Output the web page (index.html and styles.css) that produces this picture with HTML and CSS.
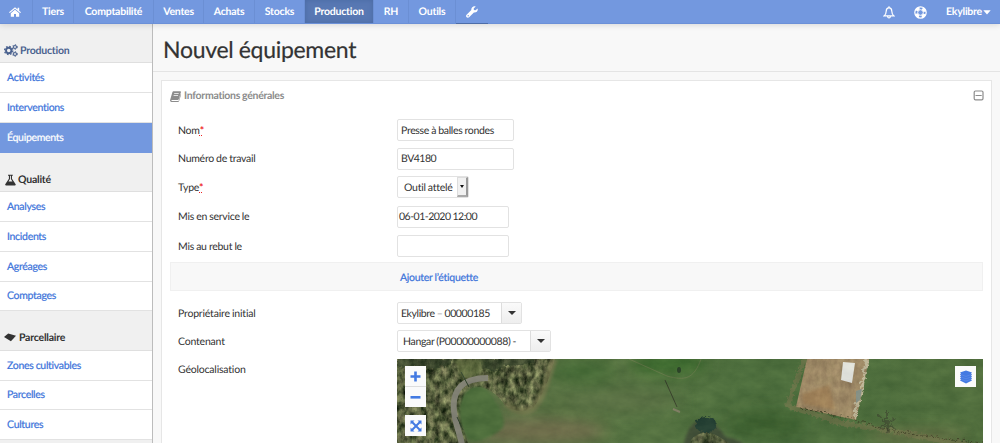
FILE: index.html
```html
<!DOCTYPE html>
<html lang="fr">
<head>
<meta charset="utf-8">
<title>Nouvel équipement</title>
<link rel="stylesheet" href="styles.css">
</head>
<body>
<nav class="topbar">
  <a class="tab tab-home"><svg width="12" height="10" viewBox="0 0 12 10"><path d="M6 .3 0 5.3l.8.8L6 1.8l5.2 4.3.8-.8-1.8-1.5V.8H8.600v1.600z"/><path d="M6 2.700 1.800 6.200v3.500H5V6.900h2v2.800h3.200V6.200z"/></svg></a>
  <a class="tab tab-tiers">Tiers</a>
  <a class="tab tab-compta">Comptabilité</a>
  <a class="tab tab-ventes">Ventes</a>
  <a class="tab tab-achats">Achats</a>
  <a class="tab tab-stocks">Stocks</a>
  <a class="tab tab-prod active">Production</a>
  <a class="tab tab-rh">RH</a>
  <a class="tab tab-outils">Outils</a>
  <a class="tab tab-wrench"><svg width="12" height="12" viewBox="0 0 12 12"><path d="M11.600 2.500 9.500 4.300 7.900 3.900 7.700 2.400 9.700.4C7.500-.4 5 1.200 5.300 4L.6 8.800c-1.600 1.700.8 4 2.500 2.500L7.900 6.500c2.500.4 4.400-1.600 3.700-4zM2.200 10.500a.7.7 0 1 1 0-1.400.7.7 0 0 1 0 1.400z" fill-rule="evenodd"/></svg></a>
  <div class="tools">
    <svg class="bell" width="12" height="13" viewBox="0 0 12 13"><path d="M6 1.600C3.800 1.900 3.200 3.500 3.200 5.200c0 2.400-.8 3.700-2.200 4.700h10C9.600 8.900 8.800 7.600 8.800 5.200 8.800 3.500 8.200 1.900 6 1.600zM6 .3v1.300M4.600 10.500c.2 1.900 2.600 1.900 2.800 0" fill="none" stroke="#fff" stroke-width="1.200"/></svg>
    <svg class="ring" width="13" height="13" viewBox="0 0 13 13"><circle cx="6.500" cy="6.500" r="5.700" fill="none" stroke="#fff" stroke-width="1.200"/><circle cx="6.500" cy="6.500" r="2.800" fill="none" stroke="#fff"/><circle cx="6.500" cy="6.500" r="4.400" fill="none" stroke="#fff" stroke-width="2.800" stroke-dasharray="3.900 3.012" stroke-dashoffset="-1.500"/></svg>
    <span class="user">Ekylibre</span><svg width="8" height="5" viewBox="0 0 8 5"><path d="M.3.300h7.400L4 4.600z"/></svg>
  </div>
</nav>
<div class="layout">
  <aside class="sidebar">
    <h2 class="group group-first"><svg width="14" height="13" viewBox="0 0 14 13"><g fill="none" stroke="#4b628f"><circle cx="4.700" cy="6.500" r="2.700" stroke-width="1.900"/><circle cx="4.700" cy="6.500" r="4.100" stroke-width="1.300" stroke-dasharray="1.600 1.620"/><circle cx="11" cy="3" r="1.500" stroke-width="1.200"/><circle cx="11" cy="3" r="2.400" stroke-width=".9" stroke-dasharray="1.200 1.310"/><circle cx="11" cy="10" r="1.500" stroke-width="1.200"/><circle cx="11" cy="10" r="2.400" stroke-width=".9" stroke-dasharray="1.200 1.310"/></g></svg>Production</h2>
    <a class="item">Activités</a>
    <a class="item">Interventions</a>
    <a class="item current">Équipements</a>
    <h2 class="group group-quality"><svg width="11" height="12" viewBox="0 0 11 12"><path d="M3 .8h4.800v1H7v3l3.500 5.200c.5.800.1 1.400-.7 1.400H1.100c-.8 0-1.200-.6-.7-1.400L3.900 4.800v-3H3zm2 1v3.300L3.500 7.400h3.900L5.900 5.100V1.800z" fill-rule="evenodd"/></svg>Qualité</h2>
    <a class="item">Analyses</a>
    <a class="item">Incidents</a>
    <a class="item">Agréages</a>
    <a class="item item-last">Comptages</a>
    <h2 class="group group-land"><svg width="12" height="9" viewBox="0 0 12 9"><path d="M4.200.5 12 2.700 6.900 8.300 0 4z"/></svg>Parcellaire</h2>
    <a class="item">Zones cultivables</a>
    <a class="item item-short">Parcelles</a>
    <a class="item">Cultures</a>
  </aside>
  <main class="main">
    <header class="heading"><h1>Nouvel équipement</h1></header>
    <section class="panel">
      <div class="panel-head">
        <svg width="11" height="11" viewBox="0 0 11 11"><path d="M3.800.3h6.500c.6 0 .8.400.6 1L8.800 8.200c-.2.600-.5.800-1.100.800H1.900c-.8 0-.8.900 0 .9h6.700L10.700 3c.4.400.4.700.3 1.100L9.100 10c-.2.600-.6.900-1.200.9H1.500C.4 10.900-.2 9.900.2 8.700L2.300 1.500C2.600.700 3 .3 3.800.3zm.5 2-.2.700h4.500l.2-.7zm-.6 1.900-.2.700H8l.2-.7z" fill-rule="evenodd"/></svg>
        <span>Informations générales</span>
        <svg class="fold" width="11" height="11" viewBox="0 0 11 11"><path d="M2.500 1h6.200q1.300 0 1.300 1.300v6.200q0 1.300-1.300 1.300H2.500q-1.300 0-1.300-1.300V2.300Q1.200 1 2.500 1zM2.500 5.500h6.200" fill="none" stroke="#8c8c8c" stroke-width="1.200"/></svg>
      </div>
      <div class="row"><label>Nom<abbr>*</abbr></label><div class="field wide">Presse à balles rondes</div></div>
      <div class="row row-number"><label>Numéro de travail</label><div class="field wide code">BV4180</div></div>
      <div class="row"><label>Type<abbr>*</abbr></label><div class="field select"><span>Outil attelé</span><i class="native-arrow"></i></div></div>
      <div class="row row-date"><label>Mis en service le</label><div class="field date">06-01-2020 12:00</div></div>
      <div class="row"><label>Mis au rebut le</label><div class="field date"></div></div>
      <div class="labels"><a>Ajouter l’étiquette</a></div>
      <div class="row"><label>Propriétaire initial</label><div class="field combo owner"><span>Ekylibre <small>–</small> 00000185</span><i class="drop"></i></div></div>
      <div class="row"><label>Contenant</label><div class="field combo container"><span>Hangar (P00000000088) -</span><i class="drop"></i></div></div>
      <div class="row row-map"><label>Géolocalisation</label>
        <div class="map">
          <svg class="aerial" width="586" height="85" viewBox="0 0 586 85" color-interpolation-filters="sRGB">
            <defs>
              <filter id="leaf" x="0" y="0" width="100%" height="100%"><feTurbulence type="fractalNoise" baseFrequency=".16 .11" numOctaves="4" seed="8"/><feColorMatrix values=".9 0 0 0 -.12  .85 .08 0 0 -.1  .65 0 0 0 -.09  0 0 0 0 1"/><feComposite in2="SourceGraphic" operator="in"/></filter>
              <filter id="grain" x="0" y="0" width="100%" height="100%"><feTurbulence type="fractalNoise" baseFrequency=".05 .09" numOctaves="4" seed="3"/><feColorMatrix values=".8 0 0 0 0  .8 0 0 0 0  .55 0 0 0 0  0 0 0 0 .12"/><feComposite in2="SourceGraphic" operator="in"/></filter>
              <filter id="rough" x="-20%" y="-20%" width="140%" height="140%"><feTurbulence baseFrequency=".18" numOctaves="2"/><feDisplacementMap in="SourceGraphic" xChannelSelector="R" yChannelSelector="G" scale="6" result="d"/><feOffset in="d" dx="-2" dy="-2"/><feGaussianBlur stdDeviation=".5"/></filter>
              <filter id="soft" x="-30%" y="-100%" width="160%" height="300%"><feGaussianBlur stdDeviation="7"/></filter>
              <filter id="fine"><feGaussianBlur stdDeviation=".5"/></filter>
              <filter id="edge" x="-10%" y="-10%" width="120%" height="120%"><feGaussianBlur stdDeviation="1.500"/></filter>
              <linearGradient id="field"><stop stop-color="#5d6c46"/><stop offset=".35" stop-color="#567642"/><stop offset=".65" stop-color="#496f3c"/><stop offset="1" stop-color="#4f703d"/></linearGradient>
            </defs>
            <path fill="url(#field)" d="M0 0h586v85H0z"/>
            <g filter="url(#soft)">
              <ellipse cx="145" cy="72" rx="65" ry="12" fill="#716e4d"/>
              <ellipse cx="185" cy="12" rx="32" ry="13" fill="#426b35"/>
              <ellipse cx="272" cy="5" rx="38" ry="10" fill="#376c2b"/>
              <ellipse cx="225" cy="42" rx="60" ry="11" fill="#5a7346"/>
              <ellipse cx="370" cy="65" rx="40" ry="14" fill="#385f2d"/>
              <ellipse cx="520" cy="77" rx="50" ry="6" fill="#6b7247"/>
            </g>
            <g filter="url(#fine)"><path d="M0 0h158c-7 22-12 37-22 49-12 6-24 2-29-4C99 34 90 28 80 28c-14 3-18 18-14 38l5 19H0z" filter="url(#leaf)"/></g>
            <path d="M157 0c-9 28-13 43-22 50-10 5-20 1-26-6" fill="none" stroke="#7c7d52" stroke-width="7" opacity=".7" filter="url(#edge)"/>
            <path d="M0 0h55v7l-20 3-35-2zM82 0h55v5l-28 2-12 6-12-3z" fill="#253521" opacity=".6" filter="url(#rough)"/>
            <path d="M57 0h28v14L66 20z" fill="#60703f" opacity=".7" filter="url(#edge)"/>
            <path d="M77 28c10-1 16 4 20 12 8 13 13 22 8 30-10 8-25 15-33 11-8-12-12-25-8-38 2-8 6-13 13-15z" fill="#4a6f3b" filter="url(#edge)"/>
            <path d="M91 19c-27 0-36 13-34 33 1 13 6 22 8 34" fill="none" stroke="#85857a" stroke-width="6" filter="url(#fine)"/>
            <path d="m64 13 8 15M60 58l6 13" stroke="#293d29" fill="none"/>
            <path d="m232 0 38 17c18 5 27 3 34-17" fill="none" stroke="#7b8058" opacity=".5" filter="url(#fine)"/>
            <path d="m268 21 12 27" stroke="#353f2b" fill="none" filter="url(#fine)"/><path d="m276 50 7 3" stroke="#858369" stroke-width="2" filter="url(#fine)"/>
            <ellipse cx="282" cy="11" rx="2" ry="3" fill="#213c23"/>
            <path d="m410 0-11 48 60 13L472 0z" fill="#bd9c78"/>
            <path d="m410 0-11 48 60 13L472 0z" filter="url(#leaf)" opacity=".22"/>
            <path d="m405 35 27-9 6 25-32-6z" fill="#a67b4d" opacity=".5" filter="url(#edge)"/>
            <path d="m446 3 12 1-3 20-11-3z" fill="#f2f3ef"/>
            <path d="m471 0-5 25-8 34" fill="none" stroke="#c7bea1" stroke-width="3" filter="url(#rough)"/>
            <path d="m459 32 6-2-2 11-4 3z" fill="#88958e"/>
            <path d="m408 0-17 47 55 18 35 5 105 19" fill="none" stroke="#78754e" stroke-width="5" opacity=".6" filter="url(#rough)"/>
            <path d="m403 49 55 12 38 12 90 12" fill="none" stroke="#373820" stroke-dasharray="3 2" opacity=".8" filter="url(#rough)"/>
            <path d="m490 65-8-8m8 8 0-12m0 12 9-5m-9 5 2 9m-2-9-8 5m8-5 9 6" stroke="#353d2b" stroke-width="2" opacity=".6" filter="url(#rough)"/>
            <path d="M286 90c2-13 6-26 18-30 12-2 19 11 25 18 10 2 17 4 21 12z" fill="#3a4934" filter="url(#edge)"/>
            <path d="M290 90c5-16 13-15 20-17 9 2 16 7 31 17z" filter="url(#leaf)" opacity=".8"/>
            <ellipse cx="309" cy="66" rx="10" ry="8" fill="#1b3930" filter="url(#rough)"/>
            <path d="M0 0h586v85H0z" filter="url(#grain)"/>
          </svg>
          <div class="controls">
            <div class="zoom"><b><svg width="11" height="11" viewBox="0 0 11 11"><path d="M4.200.500h2.600v3.700h3.700v2.600H6.800v3.700H4.200V6.800H.5V4.200h3.700z"/></svg></b><b><svg width="11" height="11" viewBox="0 0 11 11"><path d="M.5 4h10v2.600H.5z"/></svg></b></div>
            <div class="full"><svg width="12" height="12" viewBox="0 0 12 12"><path d="M.5.500h4L3.200 1.800 6 4.600l2.800-2.800L7.500.500h4v4l-1.300-1.300L7.400 6l2.800 2.800 1.300-1.300v4h-4l1.300-1.300L6 7.400l-2.800 2.800 1.300 1.300h-4v-4l1.300 1.300L4.600 6 1.800 3.200.5 4.500z"/></svg></div>
          </div>
          <div class="layers"><svg width="14" height="14" viewBox="0 0 14 14"><path d="m7 .5 6 2-1 1 1 1-1 1 1 1-1 1 1 1-1 1 1 1-6 3-6-3 1-1-1-1 1-1-1-1 1-1-1-1 1-1-1-1z"/><path d="m2 4.600 5 1.800 5-1.800M2 7l5 1.800L12 7M2 9.200l5 1.800 5-1.800" fill="none" stroke="#7398eb" stroke-width=".4"/></svg></div>
        </div>
      </div>
    </section>
  </main>
</div>
</body>
</html>
```

FILE: styles.css
```css
* { box-sizing: border-box; }
body { margin: 0; height: 443px; overflow: hidden; background: #f8f8f8; color: #333; font: 10.5px/14px Lato, sans-serif; font-variant-ligatures: none; text-rendering: geometricPrecision; letter-spacing: -.28px; word-spacing: -.2px; }
svg { display: block; flex: none; }
h1, h2 { margin: 0; }
.topbar { display: flex; height: 24px; background: #7398df; color: #fff; font-weight: 700; border-bottom: 1px solid #6b90d8; position: relative; z-index: 1; box-shadow: 0 1px 6px #0002; letter-spacing: -.22px; }
.topbar svg { fill: #fff; }
.tab { display: flex; align-items: center; justify-content: center; padding-top: 1px; border-right: 1px solid #6b8fd4; white-space: nowrap; }
.tab-home { width: 33px; padding-right: 2px; }
.tab-tiers { width: 41px; }
.tab-compta { width: 80px; }
.tab-ventes { width: 50px; }
.tab-achats { width: 51px; }
.tab-stocks { width: 50px; }
.tab-prod { width: 69px; }
.tab-rh { width: 35px; }
.tab-outils { width: 47px; }
.tab-wrench { width: 32px; border-right: 0; border-bottom: 1px solid #4d6da8; height: 24px; }
.tab.active { background: #5878b3; box-shadow: inset 0 0 5px #3c5b9580; }
.tools { display: flex; align-items: center; margin-left: auto; padding: 1px 9px 0 0; }
.bell { margin-right: 19px; }
.ring { margin-right: 19px; }
.user { margin-right: 1px; }
.layout { display: flex; height: 419px; }
.sidebar { width: 153px; flex: none; background: #f0f0f0; border-right: 1px solid #bcbcbc; }
.group { display: flex; align-items: center; font-size: 10.5px; font-weight: 700; border-bottom: 1px solid #dfdfdf; white-space: nowrap; letter-spacing: -.22px; }
.group svg { fill: #333; }
.group-first { height: 39px; padding: 15px 0 0 4px; gap: 2px; color: #4b628f; }
.group-quality { height: 39px; padding: 15px 0 0 5px; gap: 2px; }
.group-land { height: 40px; padding: 14px 0 0 4px; gap: 3px; }
.item { display: flex; align-items: center; height: 30px; padding-left: 7px; background: #fff; border-bottom: 1px solid #e2e2e2; color: #3b73da; letter-spacing: -.3px; -webkit-text-stroke: .2px; }
.item.current { background: #7398df; color: #fff; border-color: #7398df; }
.item-last { height: 29px; }
.item-short { height: 29px; }
.main { flex: 1; min-width: 0; }
.heading { height: 48px; padding: 10px; border-bottom: 1px solid #e4e4e4; }
h1 { font-size: 23px; line-height: 30px; font-weight: 400; color: #333; -webkit-text-stroke: .2px; letter-spacing: -.3px; }
.panel { margin: 8px 8px 0; height: 380px; border: 1px solid #e6e6e6; background: #fff; padding: 0 8px; }
.panel-head { display: flex; align-items: center; height: 35px; padding-bottom: 5px; gap: 3px; color: #8c8c8c; font-weight: 700; letter-spacing: -.3px; }
.panel-head svg { fill: #8c8c8c; }
.panel-head .fold { margin-left: auto; margin-right: -1px; margin-bottom: 1px; }
.row { display: flex; align-items: center; height: 28px; padding-left: 8px; }
.row label { width: 219px; flex: none; padding-top: 1px; letter-spacing: -.27px; }
.row:nth-last-child(-n+3) label { letter-spacing: -.2px; }
.row-number { height: 29px; }
.row-date { height: 31px; }
.row-date label { padding: 0; }
abbr { color: #e22; text-decoration: underline dotted 1px; font-weight: 700; }
.field { display: flex; align-items: center; height: 22px; padding: 1px 0 0 3px; border: 1px solid #e2e2e2; border-radius: 2px; background: #fff; white-space: nowrap; letter-spacing: -.33px; }
.wide { width: 117px; }
.code { letter-spacing: -.5px; }
.date { width: 112px; padding-left: 1px; letter-spacing: -.5px; }
.field.select, .field.combo { padding-top: 0; }
.select span, .combo span { padding-top: 1px; }
.field.select { width: 72px; padding-left: 6px; justify-content: space-between; letter-spacing: -.27px; }
.native-arrow { display: grid; place-items: center; width: 11px; height: 20px; background: #f1f1f1; border: solid #ddd; border-width: 1px 2px 2px 1px; border-right-color: #999; border-bottom-color: #aaa; }
.native-arrow::after { content: ""; border: solid transparent; border-width: 3px 2.500px 0; border-top-color: #111; }
.labels { display: flex; align-items: center; height: 29px; margin: 2px 0 8px; padding: 2px 0 0 229px; border: 1px solid #f0f0f0; background: #f8f8f8; color: #3b73da; -webkit-text-stroke: .2px; letter-spacing: -.28px; }
.combo { justify-content: space-between; }
.owner { width: 125px; letter-spacing: -.4px; }
.field.container { width: 154px; padding-left: 5px; letter-spacing: -.34px; }
small { color: #999; font-size: inherit; }
.drop { display: grid; place-items: center; width: 20px; height: 20px; border-left: 1px solid #ddd; background: linear-gradient(#fafafa, #eee); }
.drop::after { content: ""; border: solid transparent; border-width: 4px 4px 0; border-top-color: #333; }
.row-map { height: 84px; margin-top: 4px; align-items: flex-start; }
.row-map label { padding-top: 4px; }
.map { position: relative; width: 586px; height: 84px; flex: none; overflow: hidden; }
.map svg { fill: #437ae2; }
.controls { position: absolute; left: 8px; top: 7px; display: grid; gap: 8px; }
.zoom b, .full, .layers { display: grid; place-items: center; width: 21px; height: 21px; background: #fafafa; }
.zoom b:first-child { border-bottom: 1px solid #ddd; }
.zoom b:last-child { height: 20px; }
.layers { position: absolute; right: 7px; top: 7px; }
```
